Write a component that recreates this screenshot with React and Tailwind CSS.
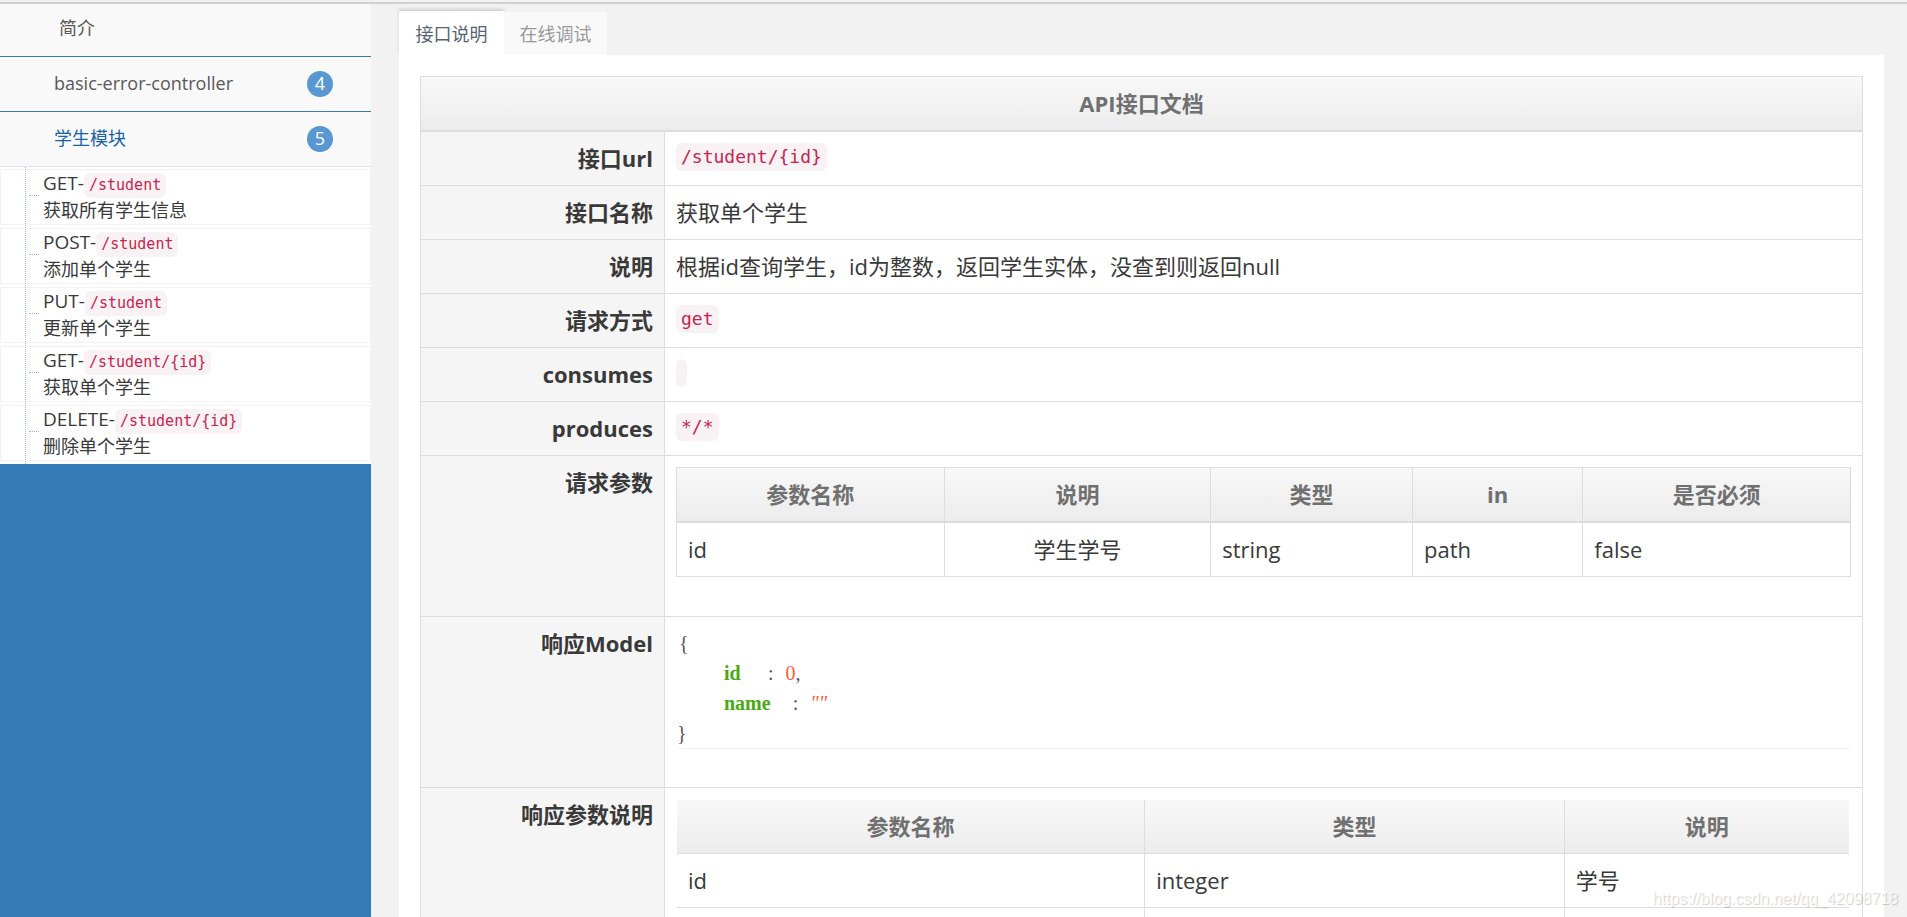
import { useState } from "react";

const SANS = "font-['Open_Sans','Noto_Sans_CJK_SC',sans-serif]";

const endpoints = [
  { method: "GET", path: "/student", title: "获取所有学生信息" },
  { method: "POST", path: "/student", title: "添加单个学生" },
  { method: "PUT", path: "/student", title: "更新单个学生" },
  { method: "GET", path: "/student/{id}", title: "获取单个学生" },
  { method: "DELETE", path: "/student/{id}", title: "删除单个学生" },
];

function ModuleLink({ name, count, active }) {
  return (
    <a
      href="#module"
      className={`flex h-[55px] items-center justify-between border-b bg-[#f9f9f9] pr-[38px] pb-px pl-[54px] text-[18px] ${
        active ? "border-[#e5e5e5] text-[#1963aa]" : "border-[#337ab7] text-[#585858]"
      }`}
    >
      <span>{name}</span>
      <span className="flex size-[26px] items-center justify-center rounded-full bg-[#5897d1] pb-px text-[18px] leading-none text-white">
        {count}
      </span>
    </a>
  );
}

function Endpoint({ method, path, title }) {
  return (
    <li className="relative h-14 border border-[#f2f2f2] bg-white">
      <span className="absolute top-[25px] left-7 w-[10px] border-t border-dotted border-[#9dbdd6]" />
      <a href="#endpoint" className="block pl-[42px] text-[18px] leading-[26px] text-[#393939]">
        <span className="flex h-[27px] items-start">
          <span className="text-[19px]">{method}-</span>
          <code className="mt-[3px] rounded-md bg-[#f9f2f4] px-[5px] font-['DejaVu_Sans_Mono',monospace] text-[15px] leading-[25px] text-[#c7254e]">
            {path}
          </code>
        </span>
        <span className="block">{title}</span>
      </a>
    </li>
  );
}

function Sidebar() {
  return (
    <nav className="flex w-[371px] shrink-0 flex-col bg-[#337ab7]">
      <a
        href="#intro"
        className="flex h-[53px] items-center border-b border-[#337ab7] bg-[#f9f9f9] pb-1 pl-[59px] text-[18px] text-[#585858]"
      >
        简介
      </a>
      <ModuleLink name="basic-error-controller" count={4} />
      <ModuleLink name="学生模块" count={5} active />
      <div className="relative bg-white pt-[2px] pb-[3px]">
        <ul className="flex flex-col gap-[3px]">
          {endpoints.map((e) => (
            <Endpoint key={e.method + e.path} {...e} />
          ))}
        </ul>
        <span className="absolute inset-y-0 left-[25px] border-l border-dotted border-[#9dbdd6]" />
      </div>
    </nav>
  );
}

function Code({ children }) {
  return (
    <code className="inline-block h-7 min-w-[11px] rounded-md bg-[#f9f2f4] px-[5px] align-top font-['DejaVu_Sans_Mono',monospace] text-[18px] leading-[28px] text-[#c7254e]">
      {children}
    </code>
  );
}

function Row({ label, children }) {
  return (
    <tr className="h-[54px]">
      <th scope="row" className="border border-[#dddddd] bg-[#f5f5f5] px-[11px] py-[11px] text-right align-top font-bold">
        {label}
      </th>
      <td className="border border-[#dddddd] px-[11px] py-[11px] align-top">{children}</td>
    </tr>
  );
}

const headRow = "bg-linear-to-b from-[#f8f8f8] to-[#ececec] text-[#707070]";

function ParamTable() {
  const head = ["参数名称", "说明", "类型", "in", "是否必须"];
  const cell = "border border-[#dddddd] px-[11px]";
  return (
    <table className="mb-7 w-full table-fixed border-collapse">
      <colgroup>
        <col className="w-[22.8%]" />
        <col className="w-[22.7%]" />
        <col className="w-[17.2%]" />
        <col className="w-[14.5%]" />
        <col />
      </colgroup>
      <thead>
        <tr className={`h-[55px] ${headRow}`}>
          {head.map((h) => (
            <th key={h} scope="col" className="border border-b-2 border-[#dddddd] font-bold">
              {h}
            </th>
          ))}
        </tr>
      </thead>
      <tbody>
        <tr className="h-[54px]">
          <td className={cell}>id</td>
          <td className={`${cell} text-center`}>学生学号</td>
          <td className={cell}>string</td>
          <td className={cell}>path</td>
          <td className={cell}>false</td>
        </tr>
      </tbody>
    </table>
  );
}

function ResponseTable() {
  const rows = [
    ["id", "integer", "学号"],
    ["", "", ""],
  ];
  return (
    <div className="pt-px pr-[2px] pl-px">
      <table className="w-full table-fixed border-collapse">
        <colgroup>
          <col className="w-[39.9%]" />
          <col className="w-[35.8%]" />
          <col />
        </colgroup>
        <thead>
          <tr className={`h-[54px] ${headRow}`}>
            {["参数名称", "类型", "说明"].map((h) => (
              <th key={h} scope="col" className="border-r border-b border-[#dddddd] font-bold last:border-r-0">
                {h}
              </th>
            ))}
          </tr>
        </thead>
        <tbody>
          {rows.map((r, i) => (
            <tr key={i} className="h-[54px]">
              {r.map((c, j) => (
                <td key={j} className="border-r border-b border-[#dddddd] px-[11px] last:border-r-0">
                  {c}
                </td>
              ))}
            </tr>
          ))}
        </tbody>
      </table>
    </div>
  );
}

function ModelField({ name, children }) {
  return (
    <div className="flex pl-12">
      <span className="min-w-[22px] font-bold text-[#4aa912]">{name}</span>
      <span className="pr-3 pl-[22px]">:</span>
      {children}
    </div>
  );
}

function ResponseModel() {
  return (
    <div className="mb-[27px] rounded-md border-b border-[#f0f0f0] font-['Liberation_Serif',serif] text-[20px] leading-[30px] text-[#555555]">
      <div className="pl-[3px]">{"{"}</div>
      <ModelField name="id">
        <span className="text-[#ff5c34]">0</span>
        <span>,</span>
      </ModelField>
      <ModelField name="name">
        <span className="text-[#ff5c34] italic">""</span>
      </ModelField>
      <div className="pl-px">{"}"}</div>
    </div>
  );
}

function ApiDoc() {
  return (
    <table className="w-full table-fixed border-collapse text-[22px] leading-[31px] text-[#393939]">
      <colgroup>
        <col className="w-[244px]" />
        <col />
      </colgroup>
      <thead>
        <tr className={`h-[54px] ${headRow}`}>
          <th colSpan={2} scope="col" className="border border-b-2 border-[#dddddd] font-bold">
            API接口文档
          </th>
        </tr>
      </thead>
      <tbody>
        <Row label="接口url"><Code>{"/student/{id}"}</Code></Row>
        <Row label="接口名称">获取单个学生</Row>
        <Row label="说明">根据id查询学生，id为整数，返回学生实体，没查到则返回null</Row>
        <Row label="请求方式"><Code>get</Code></Row>
        <Row label="consumes"><Code /></Row>
        <Row label="produces"><Code>*/*</Code></Row>
        <Row label="请求参数"><ParamTable /></Row>
        <Row label="响应Model"><ResponseModel /></Row>
        <Row label="响应参数说明"><ResponseTable /></Row>
      </tbody>
    </table>
  );
}

export default function App() {
  const [tab, setTab] = useState("doc");
  const tabs = [
    { id: "doc", label: "接口说明" },
    { id: "debug", label: "在线调试" },
  ];
  return (
    <div className={`relative flex h-screen flex-col overflow-hidden bg-[#f2f2f2] ${SANS}`}>
      <div className="h-1 shrink-0 border-b-2 border-[#d0d0d0]" />
      <div className="flex min-h-0 flex-1">
        <Sidebar />
        <main className="flex min-w-0 flex-1 flex-col overflow-hidden pt-[7px] pr-[23px] pl-7">
          <div role="tablist" className="flex shrink-0 items-end">
            {tabs.map((t) => (
              <button
                key={t.id}
                type="button"
                role="tab"
                aria-selected={tab === t.id}
                onClick={() => setTab(t.id)}
                className={`pt-[2px] text-[18px] ${
                  tab === t.id
                    ? "h-11 w-[105px] bg-white text-[#576373] shadow-[0_-2px_3px_0_rgba(0,0,0,0.15)]"
                    : "h-[43px] w-[103px] bg-[#f9f9f9] text-[#999999]"
                }`}
              >
                {t.label}
              </button>
            ))}
          </div>
          <section role="tabpanel" className="relative bg-white px-[21px] pt-[21px]">
            <ApiDoc />
          </section>
        </main>
      </div>
      <div className="absolute right-[9px] bottom-[6px] font-['Liberation_Sans',sans-serif] text-[16px] leading-6 text-white/80 [text-shadow:1px_1px_1px_rgba(0,0,0,0.2)]">
        https://blog.csdn.net/qq_42098718
      </div>
    </div>
  );
}
